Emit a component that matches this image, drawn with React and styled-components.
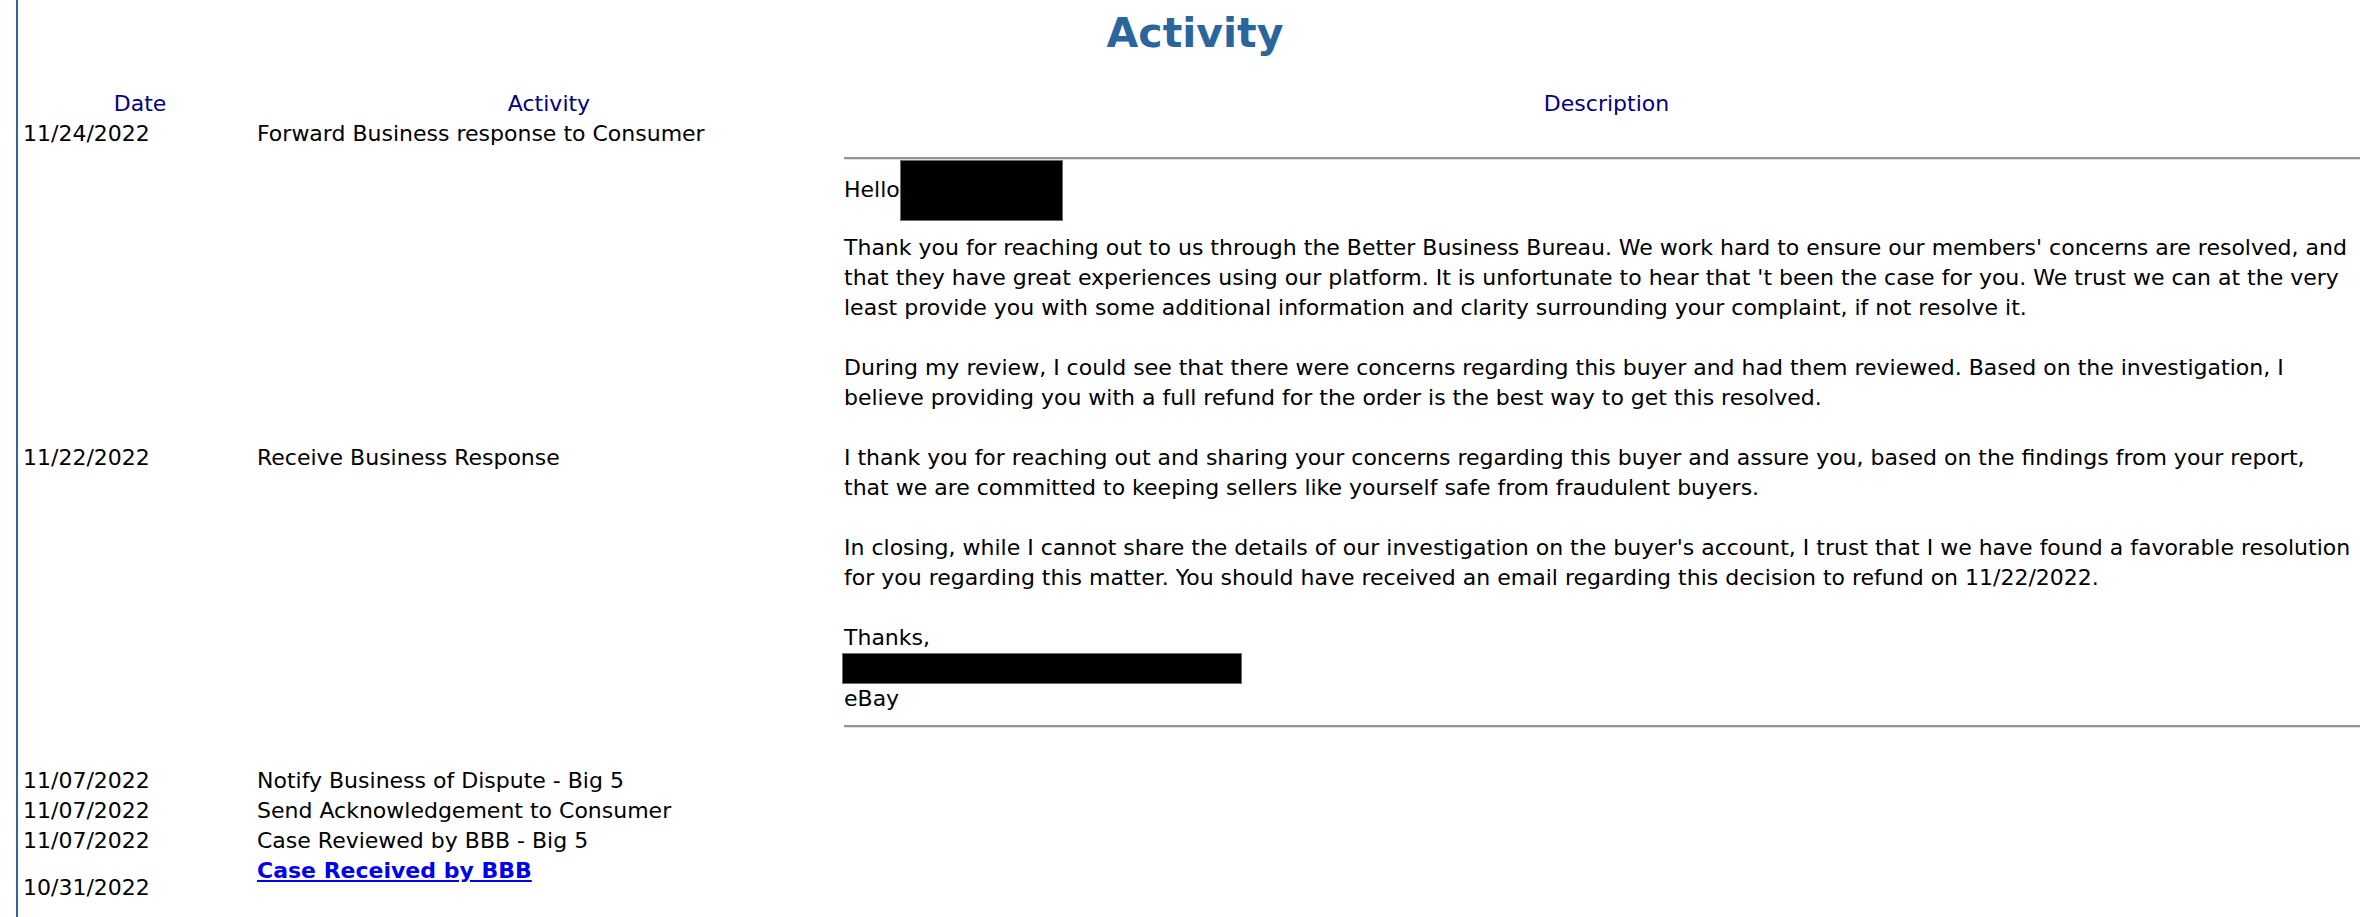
import React from "react";
import styled, { createGlobalStyle } from "styled-components";

const GlobalStyle = createGlobalStyle`
  html, body {
    margin: 0;
    overflow: hidden;
    background: #fff;
  }
  body {
    font-family: "DejaVu Sans", Verdana, sans-serif;
    font-size: 22px;
    line-height: 30px;
    color: #000;
  }
`;

const Page = styled.div`
  margin-left: 16px;
  width: 2354px;
  min-height: 917px;
  padding-top: 9px;
  border-left: 2px solid #33669a;
`;

const Title = styled.h1`
  margin: 0 0 32px;
  font-size: 41px;
  line-height: 48px;
  font-weight: bold;
  color: #2a659b;
  text-align: center;
`;

const Table = styled.div`
  margin-left: 5px;
`;

const Row = styled.div`
  display: grid;
  grid-template-columns: 234px 584px 1531px;
  align-items: center;
  min-height: ${(p) => (p.$tall ? "64px" : "0")};
`;

const HeadCell = styled.div`
  text-align: center;
  color: #000080;
`;

const Cell = styled.div`
  align-self: ${(p) => (p.$top ? "start" : "center")};
  white-space: nowrap;
`;

const Description = styled.div`
  padding-left: 3px;
  white-space: nowrap;
`;

const Rule = styled.hr`
  height: 0;
  margin: ${(p) => (p.$end ? "11px 0 38px" : "8px 0 0")};
  border: 0;
  border-top: 2px solid #979797;
  border-bottom: 1px solid #dedede;
`;

const Greeting = styled.div`
  margin-bottom: 12px;
`;

const Redacted = styled.span`
  display: ${(p) => (p.$block ? "block" : "inline-block")};
  width: ${(p) => p.$w}px;
  height: ${(p) => p.$h}px;
  margin-left: ${(p) => (p.$block ? "-2px" : "0")};
  vertical-align: middle;
  box-sizing: border-box;
  background: #000;
  border: 1px solid #6d6d6d;
`;

const Paragraph = styled.p`
  margin: 0 0 30px;
`;

const Signature = styled.div``;

const CaseLink = styled.a`
  color: #0000ee;
  font-weight: bold;
  text-decoration: underline;
`;

const letter = [
  [
    "Thank you for reaching out to us through the Better Business Bureau. We work hard to ensure our members' concerns are resolved, and",
    "that they have great experiences using our platform. It is unfortunate to hear that 't been the case for you. We trust we can at the very",
    "least provide you with some additional information and clarity surrounding your complaint, if not resolve it.",
  ],
  [
    "During my review, I could see that there were concerns regarding this buyer and had them reviewed. Based on the investigation, I",
    "believe providing you with a full refund for the order is the best way to get this resolved.",
  ],
  [
    "I thank you for reaching out and sharing your concerns regarding this buyer and assure you, based on the findings from your report,",
    "that we are committed to keeping sellers like yourself safe from fraudulent buyers.",
  ],
  [
    "In closing, while I cannot share the details of our investigation on the buyer's account, I trust that I we have found a favorable resolution",
    "for you regarding this matter. You should have received an email regarding this decision to refund on 11/22/2022.",
  ],
];

const BusinessResponse = () => (
  <Description>
    <Rule />
    <Greeting>
      Hello<Redacted $w={163} $h={61} />
    </Greeting>
    {letter.map((lines, i) => (
      <Paragraph key={i}>
        {lines.map((line, j) => (
          <React.Fragment key={j}>
            {line}
            {j < lines.length - 1 && <br />}
          </React.Fragment>
        ))}
      </Paragraph>
    ))}
    <Signature>
      Thanks,
      <Redacted $block $w={400} $h={31} />
      eBay
    </Signature>
    <Rule $end />
  </Description>
);

const laterEvents = [
  { date: "11/07/2022", activity: "Notify Business of Dispute - Big 5" },
  { date: "11/07/2022", activity: "Send Acknowledgement to Consumer" },
  { date: "11/07/2022", activity: "Case Reviewed by BBB - Big 5" },
];

const App = () => {
  return (
    <>
      <GlobalStyle />
      <Page>
        <Title>Activity</Title>
        <Table>
          <Row>
            <HeadCell>Date</HeadCell>
            <HeadCell>Activity</HeadCell>
            <HeadCell>Description</HeadCell>
          </Row>
          <Row>
            <Cell>11/24/2022</Cell>
            <Cell>Forward Business response to Consumer</Cell>
            <Cell />
          </Row>
          <Row>
            <Cell>11/22/2022</Cell>
            <Cell>Receive Business Response</Cell>
            <BusinessResponse />
          </Row>
          {laterEvents.map((ev, i) => (
            <Row key={i}>
              <Cell>{ev.date}</Cell>
              <Cell>{ev.activity}</Cell>
              <Cell />
            </Row>
          ))}
          <Row $tall>
            <Cell>10/31/2022</Cell>
            <Cell $top>
              <CaseLink href="#">Case Received by BBB</CaseLink>
            </Cell>
            <Cell />
          </Row>
        </Table>
      </Page>
    </>
  );
};

export default App;
